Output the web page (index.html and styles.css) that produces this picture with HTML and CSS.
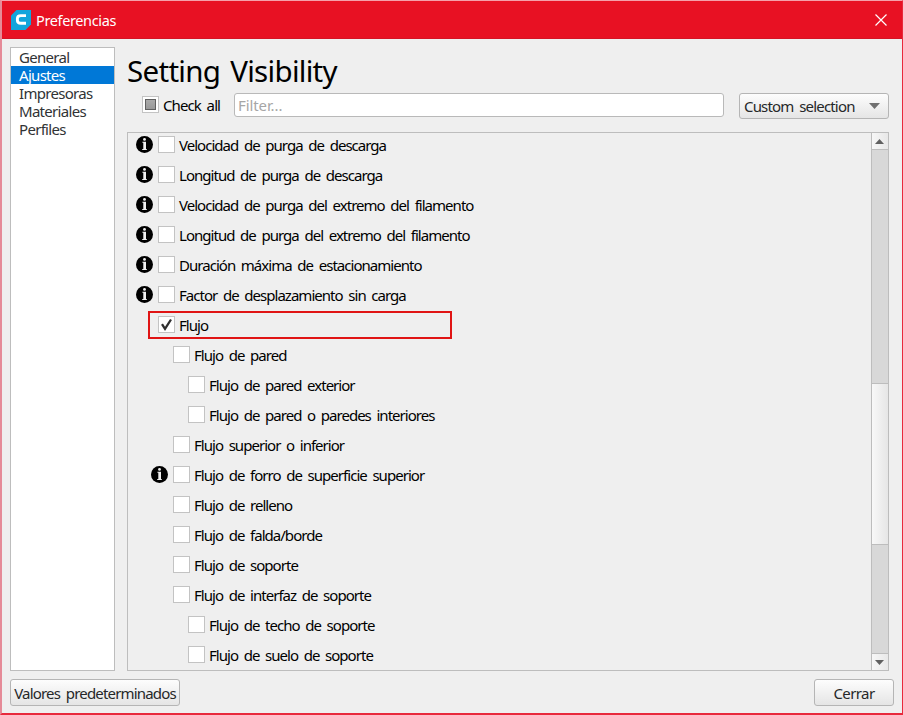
FILE: index.html
```html
<!DOCTYPE html>
<html lang="es">
<head>
<meta charset="utf-8">
<title>Preferencias</title>
<link rel="stylesheet" href="styles.css">
</head>
<body>
<svg class="defs" width="0" height="0"><defs>
<symbol id="info" viewBox="0 0 17 17"><circle cx="8.5" cy="8.5" r="8.5" fill="#000"/><circle cx="8.5" cy="3.4" r="1.4" fill="#efefef"/><path d="M6.4 5.7H10V13H10.8V14H6.2V13H7.3V6.7H6.4Z" fill="#efefef"/></symbol>
</defs></svg>
<div class="window">
<header class="titlebar">
<svg class="logo" width="20" height="20" viewBox="0 0 20 20"><path d="M5.5 0H20V14.5L14.5 20H0V5.5Z" fill="#13a5dc"/><path d="M15 5.6H9.8Q6.4 5.6 6.4 8.6V10.2Q6.4 13.2 9.8 13.2H15" fill="none" stroke="#fff" stroke-width="2.9"/></svg>
<span class="caption">Preferencias</span>
<svg class="close" width="12" height="12" viewBox="0 0 12 12"><path d="M.5.5 11.5 11.5M11.5.5.5 11.5" stroke="#fff" stroke-width="1.2"/></svg>
</header>
<main class="content">
<nav class="sidebar"><a>General</a><a class="active">Ajustes</a><a>Impresoras</a><a>Materiales</a><a>Perfiles</a></nav>
<section class="page">
<h1>Setting Visibility</h1>
<div class="toolbar">
<i class="box partial"></i><span class="checkall">Check all</span>
<div class="filter">Filter...</div>
<div class="select"><span>Custom selection</span><svg width="11" height="6" viewBox="0 0 11 6"><path d="M0 0H11L5.5 6Z" fill="#707070"/></svg></div>
</div>
<div class="panel">
<div class="list">
<div class="row"><svg class="info"><use href="#info"/></svg><i class="box"></i><span>Velocidad de purga de descarga</span></div>
<div class="row"><svg class="info"><use href="#info"/></svg><i class="box"></i><span>Longitud de purga de descarga</span></div>
<div class="row"><svg class="info"><use href="#info"/></svg><i class="box"></i><span>Velocidad de purga del extremo del filamento</span></div>
<div class="row"><svg class="info"><use href="#info"/></svg><i class="box"></i><span>Longitud de purga del extremo del filamento</span></div>
<div class="row"><svg class="info"><use href="#info"/></svg><i class="box"></i><span>Duración máxima de estacionamiento</span></div>
<div class="row"><svg class="info"><use href="#info"/></svg><i class="box"></i><span>Factor de desplazamiento sin carga</span></div>
<div class="row marked"><i class="box"><svg width="15" height="15" viewBox="0 0 15 15"><path d="M3 7.2 6 11.8 12 2.5" fill="none" stroke="#303030" stroke-width="2.3"/></svg></i><span>Flujo</span></div>
<div class="row l1"><i class="box"></i><span>Flujo de pared</span></div>
<div class="row l2"><i class="box"></i><span>Flujo de pared exterior</span></div>
<div class="row l2"><i class="box"></i><span>Flujo de pared o paredes interiores</span></div>
<div class="row l1"><i class="box"></i><span>Flujo superior o inferior</span></div>
<div class="row l1"><svg class="info"><use href="#info"/></svg><i class="box"></i><span>Flujo de forro de superficie superior</span></div>
<div class="row l1"><i class="box"></i><span>Flujo de relleno</span></div>
<div class="row l1"><i class="box"></i><span>Flujo de falda/borde</span></div>
<div class="row l1"><i class="box"></i><span>Flujo de soporte</span></div>
<div class="row l1"><i class="box"></i><span>Flujo de interfaz de soporte</span></div>
<div class="row l2"><i class="box"></i><span>Flujo de techo de soporte</span></div>
<div class="row l2"><i class="box"></i><span>Flujo de suelo de soporte</span></div>
</div>
<div class="scrollbar">
<div class="arrow"><svg width="9" height="5" viewBox="0 0 9 5"><path d="M0 5H9L4.5 0Z" fill="#606060"/></svg></div>
<div class="track"><div class="thumb"></div></div>
<div class="arrow down"><svg width="9" height="5" viewBox="0 0 9 5"><path d="M0 0H9L4.5 5Z" fill="#606060"/></svg></div>
</div>
</div>
</section>
</main>
<footer class="footer"><div class="button defaults">Valores predeterminados</div><div class="button cerrar">Cerrar</div></footer>
</div>
</body>
</html>
```
FILE: styles.css
```css
*, *::before { box-sizing: border-box; }
body { margin: 0; width: 903px; height: 715px; overflow: hidden; background: #efefef; font: 15px/18px "Noto Sans", sans-serif; letter-spacing: -0.97px; word-spacing: 2.7px; color: #000; white-space: nowrap; }
.defs { position: absolute; }
.window { width: 903px; height: 715px; display: flex; flex-direction: column; border: 1px solid #e8293c; border-left: 2px solid #e58b98; border-top-color: #f5a0aa; border-bottom: 2px solid #e8293c; }
.titlebar { height: 38px; flex: none; display: flex; align-items: center; padding: 0 15px 0 9px; background: #e81123; border-bottom: 1px solid #d41425; color: #fff; }
.caption { margin-left: 5px; font-size: 14.5px; letter-spacing: -0.37px; }
.close { margin-left: auto; }
.content { display: flex; flex: none; height: 632px; padding: 8px 13px 0 8px; gap: 12px; }
.sidebar { width: 105px; height: 624px; border: 1px solid #bdbdbd; background: #fff; color: #313335; letter-spacing: -0.7px; }
.sidebar a { display: block; height: 18px; padding-left: 8px; }
.sidebar .active { background: #0078d7; color: #fff; }
.page { flex: 1; display: flex; flex-direction: column; min-width: 0; }
h1 { margin: 0; height: 46px; font-size: 29.5px; line-height: 48px; font-weight: 400; letter-spacing: -0.7px; word-spacing: 3px; }
.toolbar { height: 26px; display: flex; padding-left: 15px; }
.box { width: 17px; height: 17px; flex: none; display: block; border: 1px solid #c3c3c3; background: #fff; }
.box svg { display: block; }
.partial { margin-top: 3px; padding: 2px; }
.partial::before { content: ""; display: block; width: 11px; height: 11px; border: 1px solid #606060; background: linear-gradient(#aaa, #999); }
.checkall { margin: 3px 0 0 4px; width: 71px; letter-spacing: -0.9px; }
.filter { width: 490px; height: 24px; border: 1px solid #b9b9b9; border-radius: 3px; background: #fff; padding: 2px 3px; color: #a6a6a6; letter-spacing: -0.1px; }
.select { width: 150px; height: 26px; margin-left: auto; display: flex; justify-content: space-between; align-items: center; padding: 0 8px 0 4px; letter-spacing: -0.83px; }
.select, .button { border: 1px solid #b5b5b5; border-radius: 3px; background: linear-gradient(#fdfdfd, #e5e5e5); color: #262829; }
.panel { height: 539px; margin-top: 13px; border: 1px solid #bdbdbd; display: flex; overflow: hidden; }
.list { flex: 1; margin-top: -4px; }
.row { height: 30px; display: flex; align-items: center; padding-left: 30px; }
.row span { margin-left: 4px; padding-top: 2px; }
.row .info { width: 17px; height: 17px; margin-left: -22px; margin-right: 5px; flex: none; }
.l1 { padding-left: 45px; }
.l2 { padding-left: 60px; }
.marked { width: 304px; height: 28px; margin: 2px 0 0 20px; padding: 0 0 2px 8px; border: 2px solid #e01414; }
.scrollbar { width: 17px; display: flex; flex-direction: column; border-left: 1px solid #bdbdbd; }
.arrow { height: 17px; flex: none; border-bottom: 1px solid #bdbdbd; display: flex; align-items: center; justify-content: center; padding-right: 1px; background: linear-gradient(90deg, #f7f7f7, #e8e8e8); }
.arrow.down { border-bottom: 0; border-top: 1px solid #bdbdbd; }
.track { flex: 1; background: #d8d8d8; padding-top: 233px; }
.thumb { height: 162px; border: solid #bdbdbd; border-width: 1px 0; background: linear-gradient(90deg, #f8f8f8, #e6e6e6); }
.footer { display: flex; justify-content: space-between; padding: 8px 8px 0; }
.button { height: 27px; text-align: center; padding-top: 4px; letter-spacing: -0.83px; }
.defaults { width: 170px; }
.cerrar { width: 80px; letter-spacing: -0.6px; }
```
